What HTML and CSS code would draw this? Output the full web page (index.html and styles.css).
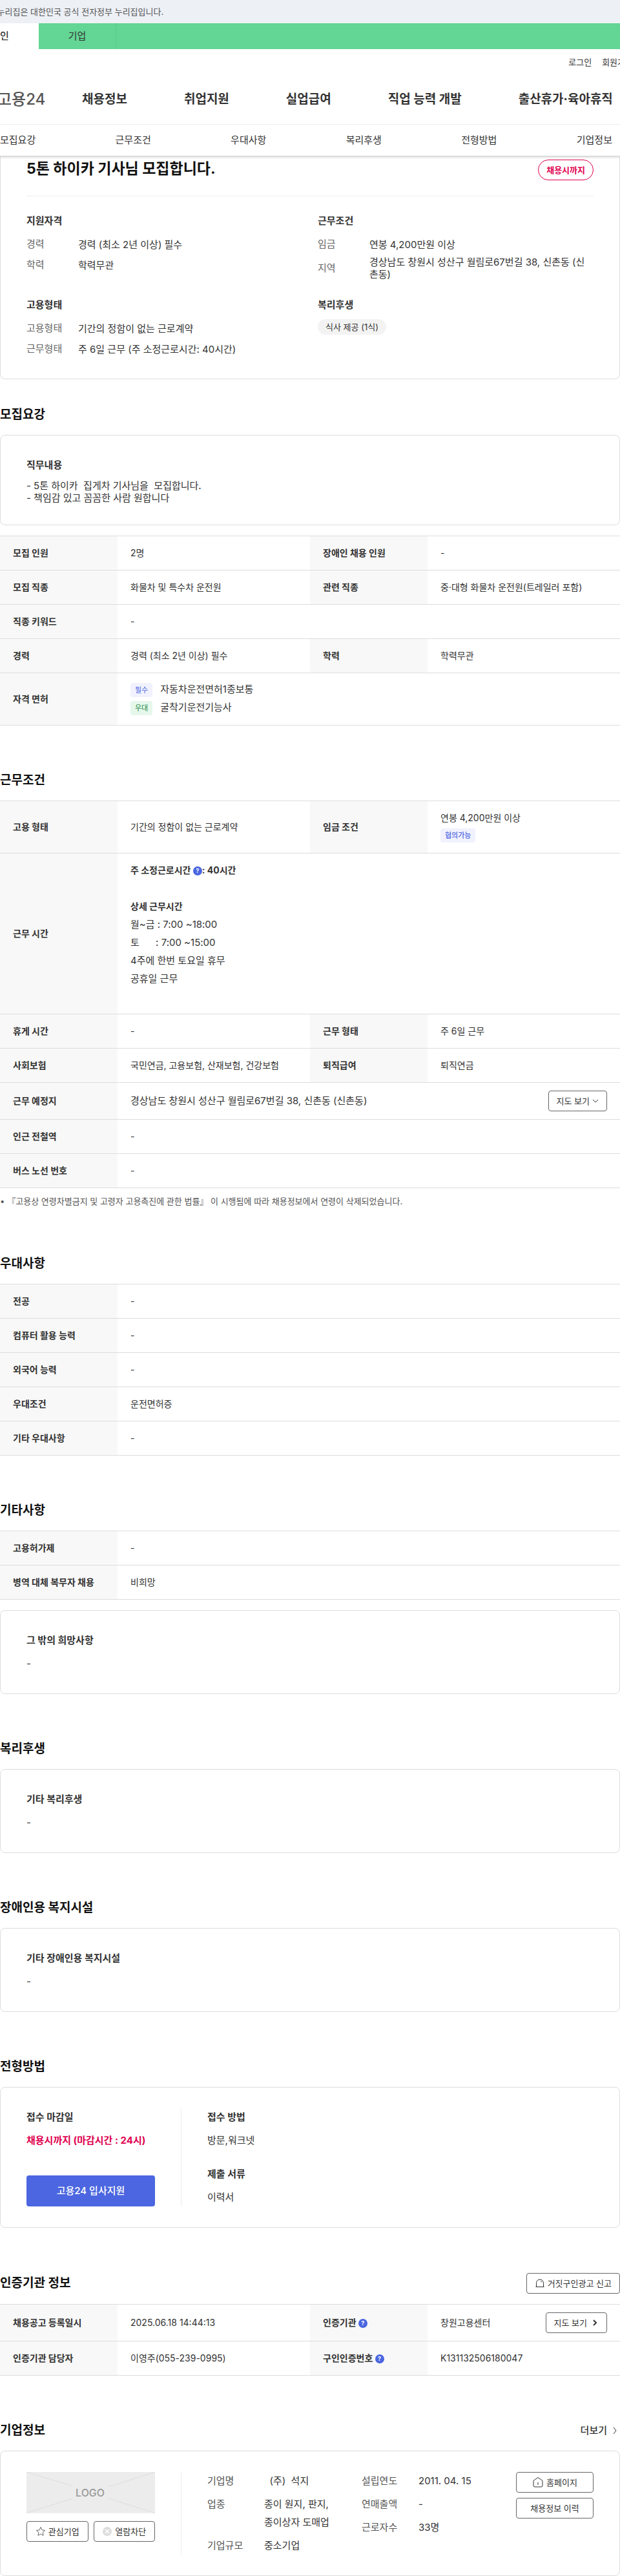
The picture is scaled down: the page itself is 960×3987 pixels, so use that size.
FILE: index.html
```html
<!DOCTYPE html>
<html lang="ko">
<head>
  <meta charset="UTF-8">
  <meta name="viewport" content="width=device-width, initial-scale=1.0">
  <title>고용24 채용정보</title>
  <link rel="stylesheet" href="styles.css">
</head>
<body>
  <!-- Header -->
  <header class="header">
    <p class="gov-bar">이 누리집은 대한민국 공식 전자정부 누리집입니다.</p>
    <nav class="site-tabs">
      <a class="active" href="#">개인</a>
      <a href="#">기업</a>
    </nav>
    <div class="util">
      <a href="#">로그인</a>
      <a href="#">회원가입</a>
    </div>
    <div class="gnb">
      <a class="brand" href="#">고용24</a>
      <nav class="gnb-menu">
        <a href="#">채용정보</a>
        <a href="#">취업지원</a>
        <a href="#">실업급여</a>
        <a href="#">직업 능력 개발</a>
        <a href="#">출산휴가·육아휴직</a>
      </nav>
    </div>
    <nav class="anchor-nav">
      <a href="#recruit">모집요강</a>
      <a href="#work">근무조건</a>
      <a href="#prefer">우대사항</a>
      <a href="#welfare">복리후생</a>
      <a href="#process">전형방법</a>
      <a href="#company">기업정보</a>
    </nav>
  </header>

  <main>
    <!-- Summary -->
    <section class="summary">
      <div class="summary-title">
        <h1>5톤 하이카 기사님 모집합니다.</h1>
        <span class="deadline">채용시까지</span>
      </div>
      <div class="summary-grid">
        <div>
          <h3>지원자격</h3>
          <dl class="pairs">
            <div><dt>경력</dt><dd>경력 (최소 2년 이상) 필수</dd></div>
            <div><dt>학력</dt><dd>학력무관</dd></div>
          </dl>
        </div>
        <div>
          <h3>근무조건</h3>
          <dl class="pairs">
            <div><dt>임금</dt><dd>연봉 4,200만원 이상</dd></div>
            <div><dt>지역</dt><dd>경상남도 창원시 성산구 월림로67번길 38, 신촌동 (신촌동)</dd></div>
          </dl>
        </div>
        <div>
          <h3>고용형태</h3>
          <dl class="pairs">
            <div><dt>고용형태</dt><dd>기간의 정함이 없는 근로계약</dd></div>
            <div><dt>근무형태</dt><dd>주 6일 근무 (주 소정근로시간: 40시간)</dd></div>
          </dl>
        </div>
        <div>
          <h3>복리후생</h3>
          <span class="chip">식사 제공 (1식)</span>
        </div>
      </div>
    </section>

    <section class="section first" id="recruit">
      <div class="section-head"><h2>모집요강</h2></div>
      <div class="box">
        <h3>직무내용</h3>
        <p class="job-text">- 5톤 하이카  집게차 기사님을  모집합니다.
- 책임감 있고 꼼꼼한 사람 원합니다</p>
      </div>
      <table class="info">
        <tr><th>모집 인원</th><td>2명</td><th>장애인 채용 인원</th><td>-</td></tr>
        <tr><th>모집 직종</th><td>화물차 및 특수차 운전원</td><th>관련 직종</th><td>중·대형 화물차 운전원(트레일러 포함)</td></tr>
        <tr><th>직종 키워드</th><td colspan="3">-</td></tr>
        <tr><th>경력</th><td>경력 (최소 2년 이상) 필수</td><th>학력</th><td>학력무관</td></tr>
        <tr>
          <th>자격 면허</th>
          <td colspan="3" class="tags">
            <ul class="license">
              <li><span class="badge">필수</span>자동차운전면허1종보통</li>
              <li><span class="badge green">우대</span>굴착기운전기능사</li>
            </ul>
          </td>
        </tr>
      </table>
    </section>

    <section class="section" id="work">
      <div class="section-head"><h2>근무조건</h2></div>
      <table class="info">
        <tr>
          <th>고용 형태</th><td>기간의 정함이 없는 근로계약</td>
          <th>임금 조건</th>
          <td><p class="pay">연봉 4,200만원 이상</p><span class="badge strong">협의가능</span></td>
        </tr>
        <tr>
          <th>근무 시간</th>
          <td colspan="3" class="hours">
            <strong>주 소정근로시간 <button type="button" class="help" aria-label="도움말">?</button>: 40시간</strong>
            <div class="hours-detail"><strong>상세 근무시간</strong>
월~금 : 7:00 ~18:00
토      : 7:00 ~15:00
4주에 한번 토요일 휴무
공휴일 근무</div>
          </td>
        </tr>
        <tr><th>휴게 시간</th><td>-</td><th>근무 형태</th><td>주 6일 근무</td></tr>
        <tr><th>사회보험</th><td>국민연금, 고용보험, 산재보험, 건강보험</td><th>퇴직급여</th><td>퇴직연금</td></tr>
        <tr>
          <th>근무 예정지</th>
          <td colspan="3" class="with-btn">
            <div class="cell-row">
              <span class="large">경상남도 창원시 성산구 월림로67번길 38, 신촌동 (신촌동)</span>
              <button type="button" class="btn">지도 보기
                <svg width="10" height="10" viewBox="0 0 10 10"><path d="M1 3l4 4 4-4"/></svg>
              </button>
            </div>
          </td>
        </tr>
        <tr><th>인근 전철역</th><td colspan="3">-</td></tr>
        <tr><th>버스 노선 번호</th><td colspan="3">-</td></tr>
      </table>
      <p class="note">『고용상 연령차별금지 및 고령자 고용촉진에 관한 법률』 이 시행됨에 따라 채용정보에서 연령이 삭제되었습니다.</p>
    </section>

    <section class="section" id="prefer">
      <div class="section-head"><h2>우대사항</h2></div>
      <table class="info">
        <tr><th>전공</th><td>-</td></tr>
        <tr><th>컴퓨터 활용 능력</th><td>-</td></tr>
        <tr><th>외국어 능력</th><td>-</td></tr>
        <tr><th>우대조건</th><td>운전면허증</td></tr>
        <tr><th>기타 우대사항</th><td>-</td></tr>
      </table>
    </section>

    <section class="section">
      <div class="section-head"><h2>기타사항</h2></div>
      <table class="info">
        <tr><th>고용허가제</th><td>-</td></tr>
        <tr><th>병역 대체 복무자 채용</th><td>비희망</td></tr>
      </table>
      <div class="box">
        <h3>그 밖의 희망사항</h3>
        <p>-</p>
      </div>
    </section>

    <section class="section" id="welfare">
      <div class="section-head"><h2>복리후생</h2></div>
      <div class="box">
        <h3>기타 복리후생</h3>
        <p>-</p>
      </div>
    </section>

    <section class="section">
      <div class="section-head"><h2>장애인용 복지시설</h2></div>
      <div class="box">
        <h3>기타 장애인용 복지시설</h3>
        <p>-</p>
      </div>
    </section>

    <section class="section" id="process">
      <div class="section-head"><h2>전형방법</h2></div>
      <div class="box split">
        <div class="split-left apply">
          <div>
            <h3>접수 마감일</h3>
            <p class="due">채용시까지 (마감시간 : 24시)</p>
          </div>
          <button type="button" class="btn-primary">고용24 입사지원</button>
        </div>
        <div class="split-right methods">
          <div>
            <h3>접수 방법</h3>
            <p>방문,워크넷</p>
          </div>
          <div>
            <h3>제출 서류</h3>
            <p>이력서</p>
          </div>
        </div>
      </div>
    </section>

    <section class="section">
      <div class="section-head">
        <h2>인증기관 정보</h2>
        <button type="button" class="btn">
          <svg width="16" height="16" viewBox="0 0 16 16"><path d="M2.500 13V7.500a5.500 5.500 0 0 1 11 0V13M1.500 13.500h13M9 4.500q1.500.5 2 2"/></svg>
          거짓구인광고 신고
        </button>
      </div>
      <table class="info">
        <tr>
          <th>채용공고 등록일시</th><td>2025.06.18 14:44:13</td>
          <th>인증기관 <button type="button" class="help" aria-label="도움말">?</button></th>
          <td class="with-btn">
            <div class="cell-row">
              <span>창원고용센터</span>
              <button type="button" class="btn">지도 보기
                <svg class="bold" width="14" height="12" viewBox="0 0 14 12"><path d="M6 2l4 4-4 4"/></svg>
              </button>
            </div>
          </td>
        </tr>
        <tr>
          <th>인증기관 담당자</th><td>이영주(055-239-0995)</td>
          <th>구인인증번호 <button type="button" class="help" aria-label="도움말">?</button></th>
          <td>K131132506180047</td>
        </tr>
      </table>
    </section>

    <section class="section" id="company">
      <div class="section-head">
        <h2>기업정보</h2>
        <a class="more" href="#">더보기
          <svg width="12" height="14" viewBox="0 0 12 14"><path d="M4 2l4 5-4 5"/></svg>
        </a>
      </div>
      <div class="box split">
        <div class="split-left">
          <svg class="logo" viewBox="0 0 200 64">
            <rect width="200" height="64" fill="#ececec"/>
            <path d="M0 0l72 22M200 0l-72 23M0 64l72-23M200 64l-72-23" stroke="#dcdcdc"/>
            <text x="99" y="38" text-anchor="middle">LOGO</text>
          </svg>
          <div class="btn-pair">
            <button type="button" class="btn">
              <svg width="16" height="16" viewBox="0 0 16 16"><path stroke="#666" d="M8 1.500l2 4.300 4.600.6-3.400 3.200.9 4.700L8 12l-4.100 2.300.9-4.700L1.400 6.400 6 5.800z"/></svg>관심기업
            </button>
            <button type="button" class="btn">
              <svg width="16" height="16" viewBox="0 0 16 16"><circle cx="8" cy="8" r="7" fill="#ddd" stroke="none"/><path d="M5 5l6 6M11 5l-6 6" stroke="#fff" stroke-width="1.500"/></svg>열람차단
            </button>
          </div>
        </div>
        <div class="split-right company">
          <dl class="facts">
            <div><dt>기업명</dt><dd>&nbsp; (주)&nbsp; 석지</dd></div>
            <div><dt>업종</dt><dd>종이 원지, 판지, 종이상자 도매업</dd></div>
            <div><dt>기업규모</dt><dd>중소기업</dd></div>
          </dl>
          <dl class="facts">
            <div><dt>설립연도</dt><dd>2011. 04. 15</dd></div>
            <div><dt>연매출액</dt><dd>-</dd></div>
            <div><dt>근로자수</dt><dd>33명</dd></div>
          </dl>
          <div class="company-links">
            <button type="button" class="btn">
              <svg width="18" height="18" viewBox="0 0 18 18"><path d="M2 6.500L9 1.500l7 5V14a2 2 0 0 1-2 2H4a2 2 0 0 1-2-2zM9 9v4"/></svg>홈페이지
            </button>
            <button type="button" class="btn">채용정보 이력</button>
          </div>
        </div>
      </div>
    </section>
  </main>
</body>
</html>
```

FILE: styles.css
```css
* {
  box-sizing: border-box;
  margin: 0;
  padding: 0;
}

body {
  font-family: Inter, "Noto Sans CJK KR", sans-serif;
  font-size: 15px;
  line-height: 28px;
  color: #333;
  background: #fff;
  overflow-x: hidden;
}

a {
  color: inherit;
  text-decoration: none;
}

ul {
  list-style: none;
}

button {
  font: inherit;
  color: inherit;
  cursor: pointer;
}

svg {
  fill: none;
  stroke: #333;
  flex: none;
}

/* Header */
.header {
  position: relative;
  overflow-x: clip;
  box-shadow: 0 2px 4px rgba(0, 0, 0, 0.2);
}

.gov-bar {
  margin-left: -20px;
  height: 36px;
  line-height: 36px;
  background: #edf0f5;
  font-size: 13px;
  color: #555;
  white-space: nowrap;
}

.site-tabs {
  display: flex;
  height: 40px;
  margin-left: -60px;
  line-height: 40px;
  background: #63d594;
}

.site-tabs a {
  width: 120px;
  text-align: center;
  border-right: 1px solid #58c888;
}

.site-tabs .active {
  background: #fff;
  border-right: 0;
  font-weight: 500;
}

.util {
  display: flex;
  justify-content: flex-end;
  gap: 16px;
  margin-right: -20px;
  padding-top: 6px;
  font-size: 13px;
}

.gnb {
  display: flex;
  align-items: center;
  height: 83px;
  padding-top: 6px;
  border-bottom: 1px solid #eee;
  white-space: nowrap;
}

.brand {
  margin-left: -4px;
  width: 131px;
  font-size: 24px;
  font-weight: 500;
  color: #555;
}

.gnb-menu {
  display: flex;
  gap: 88px;
  font-size: 19px;
  font-weight: 700;
}

.anchor-nav {
  display: flex;
  justify-content: space-between;
  height: 48px;
  padding-right: 12px;
  line-height: 48px;
}

/* Summary */
.summary {
  padding: 6px 40px 32px;
  border: 1px solid #ddd;
  border-top: 0;
  border-radius: 0 0 8px 8px;
}

.summary-title {
  display: flex;
  justify-content: space-between;
  align-items: flex-start;
  height: 57px;
  border-bottom: 1px solid #eee;
}

h1 {
  font-size: 23px;
  font-weight: 700;
  color: #111;
}

.deadline {
  height: 32px;
  padding: 0 12px;
  line-height: 30px;
  border: 1px solid #e0004f;
  border-radius: 16px;
  font-size: 13px;
  font-weight: 700;
  color: #e0004f;
}

.summary-grid {
  display: grid;
  grid-template-columns: 1fr 1fr;
  gap: 24px;
  padding-top: 24px;
}

h3 {
  margin-bottom: 8px;
  font-size: 15px;
  font-weight: 700;
}

.pairs {
  display: grid;
  gap: 4px;
}

.pairs div {
  display: flex;
  align-items: center;
  min-height: 28px;
}

.pairs dt {
  width: 80px;
  flex: none;
  color: #666;
}

.pairs dd {
  line-height: 19px;
}

.chip {
  display: block;
  width: fit-content;
  padding: 0 12px;
  line-height: 24px;
  border-radius: 12px;
  background: #f3f3f3;
  font-size: 13px;
}

/* Sections */
.section {
  margin-top: 70px;
}

.section.first {
  margin-top: 40px;
}

.section-head {
  display: flex;
  justify-content: space-between;
  align-items: center;
  margin-bottom: 16px;
}

h2 {
  font-size: 19px;
  line-height: 30px;
  font-weight: 700;
  color: #111;
}

.box {
  padding: 32px 40px;
  border: 1px solid #ddd;
  border-radius: 8px;
}

.box .job-text {
  line-height: 19px;
  white-space: pre-wrap;
}

/* Info tables */
.info {
  width: 100%;
  table-layout: fixed;
  border-collapse: collapse;
  border-top: 1px solid #ddd;
  font-size: 14px;
  line-height: 20px;
}

.box + .info,
.info + .box {
  margin-top: 16px;
}

.info th,
.info td {
  padding: 16px 20px;
  border-bottom: 1px solid #ddd;
  text-align: left;
}

.info th {
  width: 182px;
  background: #f8f8f8;
  font-weight: 700;
}

.info .tags {
  padding-top: 15px;
  padding-bottom: 15px;
}

.info .with-btn {
  padding-top: 12px;
  padding-bottom: 12px;
}

.cell-row {
  display: flex;
  justify-content: space-between;
  align-items: center;
}

.large {
  font-size: 15px;
}

.license {
  display: grid;
  gap: 6px;
  font-size: 15px;
}

.license li {
  display: flex;
  gap: 12px;
}

.badge {
  display: inline-block;
  padding: 0 7px;
  line-height: 22px;
  border-radius: 4px;
  background: #f1f2fe;
  font-size: 11px;
  color: #4b66e0;
}

.badge.green {
  background: #e6f8ec;
  color: #1c8a45;
}

.badge.strong {
  font-weight: 500;
  vertical-align: top;
}

.pay {
  margin-bottom: 6px;
}

.info .hours {
  padding-top: 12px;
  padding-bottom: 12px;
  line-height: 28px;
}

.hours-detail {
  padding: 28px 0;
  font-size: 15px;
  white-space: pre-wrap;
}

.hours-detail strong {
  font-size: 14px;
}

.help {
  width: 14px;
  height: 14px;
  border: 0;
  border-radius: 50%;
  background: #4b66e0;
  font-size: 9px;
  line-height: 14px;
  font-weight: 700;
  color: #fff;
  vertical-align: middle;
}

.note {
  margin-top: 8px;
  font-size: 13px;
  line-height: 24px;
  color: #555;
}

.note::before {
  content: "•";
  margin-right: 4px;
}

/* Buttons */
.btn {
  display: inline-flex;
  justify-content: center;
  align-items: center;
  gap: 4px;
  height: 32px;
  padding: 0 12px;
  border: 1px solid #666;
  border-radius: 4px;
  background: #fff;
  font-size: 13px;
  line-height: 20px;
  white-space: nowrap;
}

.btn .bold {
  stroke-width: 2;
}

.btn-primary {
  height: 48px;
  border: 0;
  border-radius: 4px;
  background: #4b66e0;
  font-weight: 500;
  color: #fff;
}

.more {
  display: flex;
  align-items: center;
  gap: 6px;
  padding-right: 2px;
  font-weight: 500;
}

/* Boxes with a divided left column */
.split {
  display: flex;
}

.split-left {
  display: flex;
  flex-direction: column;
  width: 240px;
  padding-right: 40px;
  border-right: 1px solid #eee;
}

.split-right {
  flex: 1;
  padding-left: 40px;
}

.apply {
  justify-content: space-between;
}

.methods {
  display: grid;
  gap: 24px;
}

.due {
  font-weight: 700;
  color: #e0004f;
}

/* Company */
.logo {
  width: 100%;
  margin-bottom: 12px;
  stroke: none;
}

.logo text {
  font-size: 16px;
  font-weight: 500;
  fill: #999;
}

.btn-pair {
  display: flex;
  gap: 8px;
}

.btn-pair .btn {
  flex: 1;
  padding: 0;
}

.company {
  display: grid;
  grid-template-columns: 1fr 1fr 120px;
  column-gap: 40px;
}

.facts div {
  display: flex;
  margin-bottom: 8px;
}

.facts div:last-child {
  margin-bottom: 0;
}

.facts dt {
  width: 88px;
  flex: none;
  color: #555;
}

.company-links {
  display: flex;
  flex-direction: column;
  gap: 8px;
}
```
